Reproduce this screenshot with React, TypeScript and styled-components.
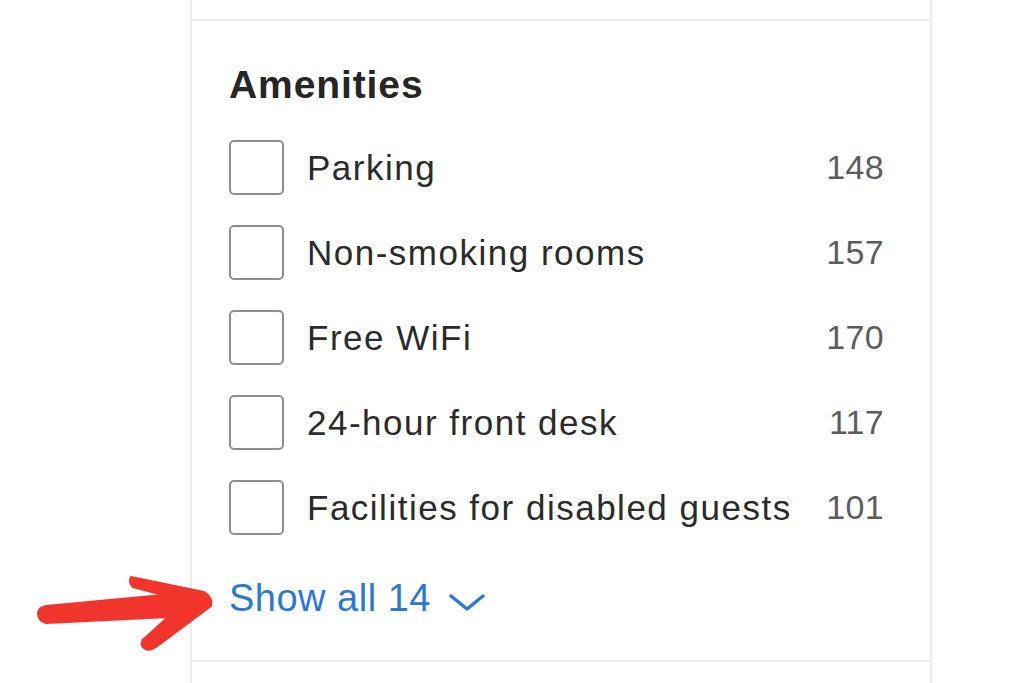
import React from "react";
import styled, { createGlobalStyle } from "styled-components";

const amenities = [
  { name: "Parking", count: 148 },
  { name: "Non-smoking rooms", count: 157 },
  { name: "Free WiFi", count: 170 },
  { name: "24-hour front desk", count: 117 },
  { name: "Facilities for disabled guests", count: 101 },
];

function App() {
  return (
    <Page>
      <GlobalStyle />
      <Sidebar>
        <PrevSection />
        <Section>
          <Heading>Amenities</Heading>
          <List>
            {amenities.map((item) => (
              <Row key={item.name}>
                <Box />
                <Label>{item.name}</Label>
                <Count>{item.count}</Count>
              </Row>
            ))}
          </List>
          <ShowAll>
            Show all 14
            <svg width="38" height="20" viewBox="0 0 38 20" fill="none">
              <path d="M3 4 L19 17 L35 4" stroke="#2c7ad0" strokeWidth="3.5" strokeLinecap="round" strokeLinejoin="round" />
            </svg>
          </ShowAll>
        </Section>
        <NextSection />
      </Sidebar>
      <Arrow width="230" height="100" viewBox="0 0 230 100">
        <path
          d="M38 53 Q39 47 46 46 L163 35 L133 27 Q128 22 131 17 L204 32 Q213 37 211 46 L156 87 Q147 93 142 86 Q140 81 146 77 L168 57 L46 63 Q38 61 38 53 Z"
          fill="#f2352c"
          stroke="#f2352c"
          strokeWidth="2"
          strokeLinejoin="round"
        />
      </Arrow>
    </Page>
  );
}

const GlobalStyle = createGlobalStyle`
  body {
    margin: 0;
    background: #ffffff;
    font-family: "Liberation Sans", Arial, sans-serif;
  }
`;

const Page = styled.div`
  position: relative;
  height: 683px;
  overflow: hidden;
  padding-left: 190px;
  box-sizing: border-box;
`;

const Sidebar = styled.div`
  width: 742px;
  box-sizing: border-box;
  border-left: 2px solid #ebebeb;
  border-right: 2px solid #ebebeb;
  display: flex;
  flex-direction: column;
`;

const PrevSection = styled.div`
  height: 19px;
`;

const NextSection = styled.div`
  height: 40px;
`;

const Section = styled.div`
  border-top: 2px solid #ebebeb;
  border-bottom: 2px solid #ebebeb;
  padding: 44px 46px 43px 37px;
  display: flex;
  flex-direction: column;
`;

const Heading = styled.h3`
  margin: 0 0 36px;
  font-size: 39px;
  line-height: 1;
  font-weight: 700;
  color: #262626;
  letter-spacing: 0.9px;
`;

const List = styled.div`
  display: flex;
  flex-direction: column;
  gap: 30px;
`;

const Row = styled.label`
  display: flex;
  align-items: center;
  height: 55px;
`;

const Box = styled.span`
  width: 55px;
  height: 55px;
  box-sizing: border-box;
  border: 2px solid #8e8e8e;
  border-radius: 5px;
  flex-shrink: 0;
`;

const Label = styled.span`
  margin-left: 23px;
  flex: 1;
  font-size: 35px;
  letter-spacing: 1.5px;
  color: #2b2b2b;
`;

const Count = styled.span`
  font-size: 34px;
  letter-spacing: 0.3px;
  color: #5c5c5c;
`;

const ShowAll = styled.a`
  margin-top: 44px;
  display: flex;
  align-items: center;
  gap: 17px;
  font-size: 38px;
  letter-spacing: 0.5px;
  line-height: 1;
  color: #2c7ad0;
  cursor: pointer;

  svg {
    margin-top: 8px;
  }
`;

const Arrow = styled.svg`
  position: absolute;
  left: 0;
  top: 560px;
`;

export default App;
